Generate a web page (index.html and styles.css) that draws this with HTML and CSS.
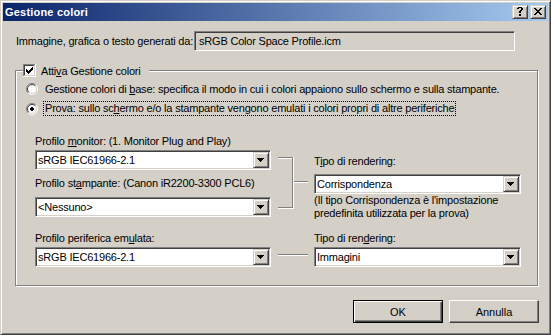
FILE: index.html
```html
<!DOCTYPE html>
<html lang="it">
<head>
  <meta charset="UTF-8">
  <title>Gestione colori</title>
  <link rel="stylesheet" href="styles.css">
</head>
<body>
  <div class="window">
    <div class="titlebar">
      <span class="title">Gestione colori</span>
      <div class="caption-buttons">
        <span class="caption-btn">
          <svg width="14" height="12" viewBox="0 0 14 12"><path d="M5 1h4v1H5z M4 2h2v1H4z M8 2h2v1H8z M8 3h2v1H8z M7 4h2v1H7z M6 5h2v2H6z M6 8h2v2H6z"/></svg>
        </span>
        <span class="caption-btn">
          <svg width="14" height="12" viewBox="0 0 14 12"><path d="M3 2h2v1H3z M9 2h2v1H9z M4 3h2v1H4z M8 3h2v1H8z M5 4h4v1H5z M6 5h2v1H6z M5 6h4v1H5z M4 7h2v1H4z M8 7h2v1H8z M3 8h2v1H3z M9 8h2v1H9z"/></svg>
        </span>
      </div>
    </div>

    <div class="client">
      <div class="source-row">
        <span class="source-label">Immagine, grafica o testo generati da:</span>
        <div class="readonly">sRGB Color Space Profile.icm</div>
      </div>

      <div class="group">
        <div class="group-legend">
          <svg class="check" width="13" height="13" viewBox="0 0 13 13">
            <rect width="13" height="13" fill="#fff"/>
            <path d="M0 0h12v1H1v11H0z" fill="#808080"/>
            <path d="M12 0h1v13H0v-1h12z" fill="#fff"/>
            <path d="M1 1h10v1H2v9H1z" fill="#404040"/>
            <path d="M11 1h1v11H1v-1h10z" fill="#d4d0c8"/>
            <path d="M9 3h1v1H9z M8 4h2v1H8z M3 5h1v1H3z M7 5h3v1H7z M3 6h2v1H3z M6 6h3v1H6z M3 7h5v1H3z M4 8h3v1H4z M5 9h1v1H5z"/>
          </svg>
          <span>Atti<u>v</u>a Gestione colori</span>
        </div>

        <div class="radio-row">
          <svg class="radio" width="12" height="12" viewBox="0 0 12 12">
            <circle cx="6" cy="6" r="5" fill="#fff"/>
            <path d="M2.1 9.9A5.5 5.5 0 0 1 9.9 2.1" fill="none" stroke="#808080"/>
            <path d="M9.9 2.1A5.5 5.5 0 0 1 2.1 9.9" fill="none" stroke="#fff"/>
            <path d="M2.8 9.2A4.5 4.5 0 0 1 9.2 2.8" fill="none" stroke="#404040"/>
            <path d="M9.2 2.8A4.5 4.5 0 0 1 2.8 9.2" fill="none" stroke="#d4d0c8"/>
          </svg>
          <span>Gestione colori di <u>b</u>ase: specifica il modo in cui i colori appaiono sullo schermo e sulla stampante.</span>
        </div>
        <div class="radio-row radio-row-second">
          <svg class="radio" width="12" height="12" viewBox="0 0 12 12">
            <circle cx="6" cy="6" r="5" fill="#fff"/>
            <path d="M2.1 9.9A5.5 5.5 0 0 1 9.9 2.1" fill="none" stroke="#808080"/>
            <path d="M9.9 2.1A5.5 5.5 0 0 1 2.1 9.9" fill="none" stroke="#fff"/>
            <path d="M2.8 9.2A4.5 4.5 0 0 1 9.2 2.8" fill="none" stroke="#404040"/>
            <path d="M9.2 2.8A4.5 4.5 0 0 1 2.8 9.2" fill="none" stroke="#d4d0c8"/>
            <path d="M5 4h2v1H5z M4 5h4v2H4z M5 7h2v1H5z"/>
          </svg>
          <span class="focused">Prova: sullo sc<u>h</u>ermo e/o la stampante vengono emulati i colori propri di altre periferiche</span>
        </div>

        <div class="pair pair-proof">
          <div class="col-left">
            <div class="field-label">Profilo <u>m</u>onitor: (1. Monitor Plug and Play)</div>
            <div class="combo">
              <span class="combo-text">sRGB IEC61966-2.1</span>
              <span class="combo-btn"><svg width="14" height="14" viewBox="0 0 14 14"><path d="M3 5h7v1H3z M4 6h5v1H4z M5 7h3v1H5z M6 8h1v1H6z"/></svg></span>
            </div>
            <div class="field-label label-spaced">Profilo st<u>a</u>mpante: (Canon iR2200-3300 PCL6)</div>
            <div class="combo combo-spaced">
              <span class="combo-text">&lt;Nessuno&gt;</span>
              <span class="combo-btn"><svg width="14" height="14" viewBox="0 0 14 14"><path d="M3 5h7v1H3z M4 6h5v1H4z M5 7h3v1H5z M6 8h1v1H6z"/></svg></span>
            </div>
          </div>
          <svg class="link" width="43" height="80" viewBox="0 0 43 80">
            <path d="M7 22h15v1H7z M21 22h1v51h-1z M7 72h15v1H7z M23 46h14v1H23z" fill="#808080"/>
            <path d="M7 23h14v1H7z M22 22h1v52h-1z M7 73h16v1H7z M23 47h14v1H23z" fill="#fff"/>
          </svg>
          <div class="col-right">
            <div class="field-label label-rendering">T<u>i</u>po di rendering:</div>
            <div class="combo combo-rendering">
              <span class="combo-text">Corrispondenza</span>
              <span class="combo-btn"><svg width="14" height="14" viewBox="0 0 14 14"><path d="M3 5h7v1H3z M4 6h5v1H4z M5 7h3v1H5z M6 8h1v1H6z"/></svg></span>
            </div>
            <p class="note">(Il tipo Corrispondenza è l'impostazione predefinita utilizzata per la prova)</p>
          </div>
        </div>

        <div class="pair pair-emulated">
          <div class="col-left">
            <div class="field-label">Profilo periferica em<u>u</u>lata:</div>
            <div class="combo">
              <span class="combo-text">sRGB IEC61966-2.1</span>
              <span class="combo-btn"><svg width="14" height="14" viewBox="0 0 14 14"><path d="M3 5h7v1H3z M4 6h5v1H4z M5 7h3v1H5z M6 8h1v1H6z"/></svg></span>
            </div>
          </div>
          <svg class="link" width="43" height="35" viewBox="0 0 43 35">
            <path d="M7 22h30v1H7z" fill="#808080"/>
            <path d="M7 23h30v1H7z" fill="#fff"/>
          </svg>
          <div class="col-right">
            <div class="field-label">Tipo di ren<u>d</u>ering:</div>
            <div class="combo">
              <span class="combo-text">Immagini</span>
              <span class="combo-btn"><svg width="14" height="14" viewBox="0 0 14 14"><path d="M3 5h7v1H3z M4 6h5v1H4z M5 7h3v1H5z M6 8h1v1H6z"/></svg></span>
            </div>
          </div>
        </div>
      </div>

      <div class="actions">
        <button class="btn btn-default">OK</button>
        <button class="btn">Annulla</button>
      </div>
    </div>
  </div>
</body>
</html>
```

FILE: styles.css
```css
* {
  box-sizing: border-box;
}

body {
  margin: 0;
  background: #d4d0c8;
  font-family: "Liberation Sans", Arial, sans-serif;
  font-size: 11px;
  letter-spacing: -0.2px;
  color: #000;
}

svg {
  display: block;
  shape-rendering: crispEdges;
}

.radio {
  shape-rendering: auto;
}

/* window frame */
.window {
  width: 551px;
  height: 335px;
  padding: 2px;
  border: 1px solid;
  border-color: #d4d0c8 #404040 #404040 #d4d0c8;
  box-shadow: inset 1px 1px #fff, inset -1px -1px #808080;
  background: #d4d0c8;
  display: flex;
  flex-direction: column;
}

.titlebar {
  height: 18px;
  display: flex;
  align-items: center;
  justify-content: space-between;
  padding: 0 2px;
  background: linear-gradient(to right, #0a246a, #a6caf0);
}

.title {
  color: #fff;
  font-weight: bold;
  letter-spacing: 0.2px;
}

.caption-buttons {
  display: flex;
  gap: 2px;
}

.caption-btn,
.combo-btn {
  border: 1px solid;
  border-color: #d4d0c8 #404040 #404040 #d4d0c8;
  box-shadow: inset 1px 1px #fff, inset -1px -1px #808080;
  background: #d4d0c8;
}

.caption-btn {
  width: 16px;
  height: 14px;
}

/* dialog body */
.client {
  display: flex;
  flex-direction: column;
}

.source-row {
  display: flex;
  align-items: center;
  height: 20px;
  margin: 10px 0 0 13px;
}

.source-label {
  width: 178px;
}

.readonly,
.combo {
  border: 1px solid;
  border-color: #808080 #fff #fff #808080;
  box-shadow: inset 1px 1px #404040, inset -1px -1px #d4d0c8;
}

.readonly {
  width: 321px;
  height: 20px;
  padding: 0 4px;
  line-height: 18px;
  background: #d4d0c8;
}

.group {
  width: 523px;
  margin: 19px 0 0 12px;
  padding: 0 10px 18px;
  border: 1px solid #808080;
  box-shadow: 1px 1px #fff, inset 1px 1px #fff;
}

.group-legend {
  display: flex;
  align-items: center;
  gap: 5px;
  width: fit-content;
  height: 13px;
  margin: -7px 0 0 -3px;
  padding-right: 8px;
  background: #d4d0c8;
}

.radio-row {
  display: flex;
  align-items: center;
  gap: 7px;
  height: 13px;
  margin-top: 5px;
}

.radio-row-second {
  margin-top: 7px;
}

.focused {
  margin-left: -1px;
  padding: 0 1px;
  line-height: 13px;
  outline: 1px dotted #000;
}

.pair {
  display: flex;
  align-items: flex-start;
  margin-left: 9px;
}

.pair-proof {
  margin-top: 20px;
}

.pair-emulated {
  margin-top: 12px;
}

.col-left {
  width: 236px;
}

.col-right {
  width: 207px;
}

.field-label {
  height: 13px;
  line-height: 13px;
  white-space: nowrap;
}

.label-spaced {
  margin-top: 7px;
}

.label-rendering {
  margin-top: 20px;
}

.combo {
  display: flex;
  height: 20px;
  margin-top: 2px;
  padding: 1px;
  background: #fff;
}

.combo-spaced {
  margin-top: 7px;
}

.combo-rendering {
  margin-top: 6px;
}

.combo-text {
  flex: 1;
  padding-left: 1px;
  line-height: 16px;
}

.combo-btn {
  width: 16px;
  height: 16px;
}

.note {
  margin: 0;
  line-height: 13px;
}

/* OK / Annulla */
.actions {
  display: flex;
  justify-content: flex-end;
  gap: 6px;
  margin-top: 14px;
  padding-right: 9px;
}

.btn {
  width: 90px;
  height: 23px;
  padding: 0;
  font: inherit;
  color: #000;
  background: #d4d0c8;
  border: 1px solid;
  border-color: #fff #404040 #404040 #fff;
  box-shadow: inset -1px -1px #808080;
}

.btn-default {
  border-color: #000;
  box-shadow: inset 1px 1px #fff, inset -1px -1px #404040, inset -2px -2px #808080;
}
```
